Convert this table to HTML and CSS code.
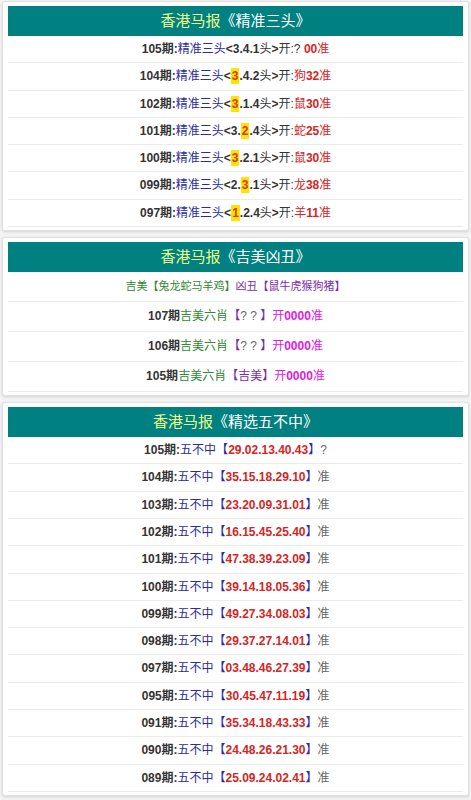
FILE: index.html
```html
<!DOCTYPE html>
<html>

<head>
    <meta name="viewport" content="width=device-width, initial-scale=1.0">
    <title>香港马报</title>
    <link rel="stylesheet" href="styles.css">
</head>

<body>

    <div class="box">
        <div class="head"><span class="hk">香港马报</span>《精准三头》</div>
        <ul class="list">
            <li><b>105期:</b><span class="blue">精准三头</span><b>&lt;3.4.1</b>头<b>&gt;</b>开:? <b class="red">00</b><span class="red">准</span></li>
            <li><b>104期:</b><span class="blue">精准三头</span><b>&lt;<i class="hit">3</i>.4.2</b>头<b>&gt;</b>开:<span class="red">狗<b>32</b>准</span></li>
            <li><b>102期:</b><span class="blue">精准三头</span><b>&lt;<i class="hit">3</i>.1.4</b>头<b>&gt;</b>开:<span class="red">鼠<b>30</b>准</span></li>
            <li><b>101期:</b><span class="blue">精准三头</span><b>&lt;3.<i class="hit">2</i>.4</b>头<b>&gt;</b>开:<span class="red">蛇<b>25</b>准</span></li>
            <li><b>100期:</b><span class="blue">精准三头</span><b>&lt;<i class="hit">3</i>.2.1</b>头<b>&gt;</b>开:<span class="red">鼠<b>30</b>准</span></li>
            <li><b>099期:</b><span class="blue">精准三头</span><b>&lt;2.<i class="hit">3</i>.1</b>头<b>&gt;</b>开:<span class="red">龙<b>38</b>准</span></li>
            <li><b>097期:</b><span class="blue">精准三头</span><b>&lt;<i class="hit">1</i>.2.4</b>头<b>&gt;</b>开:<span class="red">羊<b>11</b>准</span></li>
        </ul>
    </div>

    <div class="box">
        <div class="head"><span class="hk">香港马报</span>《吉美凶丑》</div>
        <ul class="list tall">
            <li class="small"><span class="green">吉美【兔龙蛇马羊鸡】</span><span class="purple">凶丑【鼠牛虎猴狗猪】</span></li>
            <li><b>107期</b><span class="green">吉美六肖</span><span class="purple">【</span><span class="grey">? ? </span><span class="purple">】</span><span class="pink">开<b>0000</b>准</span></li>
            <li><b>106期</b><span class="green">吉美六肖</span><span class="purple">【</span><span class="grey">? ? </span><span class="purple">】</span><span class="pink">开<b>0000</b>准</span></li>
            <li><b>105期</b><span class="green">吉美六肖</span><span class="purple">【吉美】</span><span class="pink">开<b>0000</b>准</span></li>
        </ul>
    </div>

    <div class="box">
        <div class="head"><span class="hk">香港马报</span>《精选五不中》</div>
        <ul class="list">
            <li><b>105期:</b><span class="blue">五不中【</span><b class="red">29.02.13.40.43</b><span class="blue">】</span><span class="grey">?</span></li>
            <li><b>104期:</b><span class="blue">五不中【</span><b class="red">35.15.18.29.10</b><span class="blue">】</span><span class="grey">准</span></li>
            <li><b>103期:</b><span class="blue">五不中【</span><b class="red">23.20.09.31.01</b><span class="blue">】</span><span class="grey">准</span></li>
            <li><b>102期:</b><span class="blue">五不中【</span><b class="red">16.15.45.25.40</b><span class="blue">】</span><span class="grey">准</span></li>
            <li><b>101期:</b><span class="blue">五不中【</span><b class="red">47.38.39.23.09</b><span class="blue">】</span><span class="grey">准</span></li>
            <li><b>100期:</b><span class="blue">五不中【</span><b class="red">39.14.18.05.36</b><span class="blue">】</span><span class="grey">准</span></li>
            <li><b>099期:</b><span class="blue">五不中【</span><b class="red">49.27.34.08.03</b><span class="blue">】</span><span class="grey">准</span></li>
            <li><b>098期:</b><span class="blue">五不中【</span><b class="red">29.37.27.14.01</b><span class="blue">】</span><span class="grey">准</span></li>
            <li><b>097期:</b><span class="blue">五不中【</span><b class="red">03.48.46.27.39</b><span class="blue">】</span><span class="grey">准</span></li>
            <li><b>095期:</b><span class="blue">五不中【</span><b class="red">30.45.47.11.19</b><span class="blue">】</span><span class="grey">准</span></li>
            <li><b>091期:</b><span class="blue">五不中【</span><b class="red">35.34.18.43.33</b><span class="blue">】</span><span class="grey">准</span></li>
            <li><b>090期:</b><span class="blue">五不中【</span><b class="red">24.48.26.21.30</b><span class="blue">】</span><span class="grey">准</span></li>
            <li><b>089期:</b><span class="blue">五不中【</span><b class="red">25.09.24.02.41</b><span class="blue">】</span><span class="grey">准</span></li>
        </ul>
    </div>

</body>

</html>
```

FILE: styles.css
```css
body {
    margin: 0;
    padding: 1px 2px 0 2px;
    background: #f4f4f4;
    font-family: "Liberation Sans", "Noto Sans CJK SC", sans-serif;
    font-size: 12px;
    color: #333;
}

.box {
    background: #fff;
    border: 1px solid #e2e2e2;
    border-radius: 3px;
    box-shadow: 0 1px 3px rgba(0, 0, 0, 0.15);
    padding: 4px 5px 3px 5px;
    margin-bottom: 6px;
}

.head {
    background: #008080;
    color: #fff;
    text-align: center;
    font-size: 15px;
    height: 30px;
    line-height: 30px;
}

.hk {
    color: #eeff88;
}

.list {
    list-style-type: none;
    margin: 0;
    padding: 0;
}

.list>li {
    text-align: center;
    height: 26.3px;
    line-height: 26.3px;
    border-bottom: 1px solid #ececec;
    white-space: nowrap;
}

.list.tall>li {
    height: 29px;
    line-height: 29px;
}

.list>li.small {
    font-size: 11px;
}

b {
    font-weight: 700;
}

i {
    font-style: normal;
}

.blue {
    color: #2b2ba0;
}

.red {
    color: #d42525;
}

.hit {
    background: #ffe400;
    color: #d83a00;
    padding: 1px 1px;
}

.green {
    color: #2f8a2f;
}

.purple {
    color: #7a2da8;
}

.grey {
    color: #666;
}

.pink {
    color: #e020e0;
}
```
